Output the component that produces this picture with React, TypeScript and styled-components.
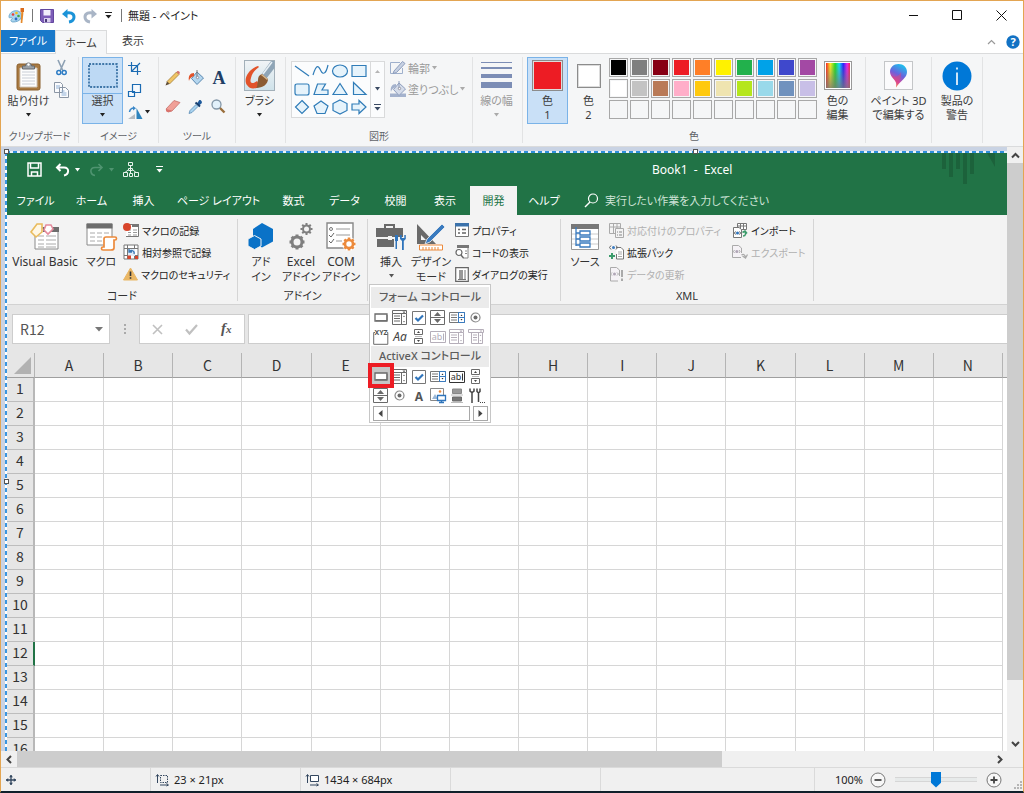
import React from "react";
import styled, { createGlobalStyle } from "styled-components";

const uiFont = `"Noto Sans", "Noto Sans CJK JP", sans-serif`;
const sheetFont = `"Noto Sans CJK JP", sans-serif`;

const GlobalStyle = createGlobalStyle`
  *, *::before, *::after { box-sizing: border-box; }
  html, body { margin: 0; padding: 0; }
  body { font-family: ${uiFont}; font-size: 11px; color: #3c3c3c; font-feature-settings: "palt"; }
  button, input { font: inherit; color: inherit; font-feature-settings: inherit; }
  button { margin: 0; padding: 0; border: 0; background: transparent; }
  svg { display: block; flex: none; overflow: visible; }
`;

/* ---------- window frame ---------- */

const Window = styled.main`
  display: flex;
  flex-direction: column;
  height: 100vh;
  min-height: 400px;
  overflow: hidden;
  background: #fff;
  border: 1px solid #e3a552;
  border-bottom: 2px solid #10202b;
`;

const TitleBar = styled.header`
  display: flex;
  align-items: center;
  height: 29px;
  flex: none;
  padding-left: 7px;
`;

const QuickTools = styled.div`
  display: flex;
  align-items: center;
  gap: 5px;
`;

const Title = styled.h1`
  margin: 0 0 0 4px;
  font-size: 11px;
  line-height: 16px;
  font-weight: 400;
  color: #222;
`;

const Divider = styled.span`
  width: 1px;
  height: 13px;
  background: #777;
  margin: 0 2px;
`;

const ToolButton = styled.button`
  display: flex;
  align-items: center;
  justify-content: center;
`;

const WindowControls = styled.div`
  display: flex;
  margin-left: auto;
`;

const WindowButton = styled.button`
  display: flex;
  align-items: center;
  justify-content: center;
  width: 44px;
  height: 29px;
`;

const PaintTabs = styled.nav`
  display: flex;
  flex: none;
  height: 24px;
  border-bottom: 1px solid #dadbdc;
`;

const PaintTab = styled.button<{ $kind?: "file" | "active" }>`
  width: ${(p) => (p.$kind === "file" ? 54 : 52)}px;
  height: ${(p) => (p.$kind === "active" ? 24 : 22)}px;
  line-height: 22px;
  background: ${(p) => (p.$kind === "file" ? "#1979ca" : p.$kind === "active" ? "#f5f6f7" : "transparent")};
  color: ${(p) => (p.$kind === "file" ? "#fff" : "#3c3c3c")};
  border: solid #dadbdc;
  border-width: ${(p) => (p.$kind === "active" ? "1px 1px 0" : "0")};
`;

const TabsEnd = styled.div`
  display: flex;
  align-items: center;
  gap: 10px;
  margin-left: auto;
  padding-right: 3px;
`;

const PaintRibbon = styled.section`
  display: flex;
  flex: none;
  padding: 3px 0;
  background: #f5f6f7;
  border-bottom: 1px solid #dadbdc;
  overflow: hidden;
`;

const PaintGroup = styled.div<{ $w: number; $pad?: number }>`
  display: flex;
  flex-direction: column;
  flex: none;
  width: ${(p) => p.$w}px;
  border-right: 1px solid #e2e3e4;
  & > div:first-child { padding-left: ${(p) => p.$pad ?? 0}px; }
`;

const GroupBody = styled.div`
  display: flex;
  align-items: flex-start;
  height: 70px;
`;

const GroupLabel = styled.div`
  text-align: center;
  height: 16px;
  font-size: 10px;
  line-height: 18px;
  color: #5f6368;
  white-space: nowrap;
`;

const BigButton = styled.button<{ $w: number; $on?: boolean; $off?: boolean }>`
  display: flex;
  flex-direction: column;
  align-items: center;
  flex: none;
  width: ${(p) => p.$w}px;
  height: 67px;
  line-height: 14px;
  white-space: nowrap;
  color: ${(p) => (p.$off ? "#9a9a9a" : "#3c3c3c")};
  background: ${(p) => (p.$on ? "#c9e0f7" : "transparent")};
  outline: ${(p) => (p.$on ? "1px solid #7ab3e8" : "none")};
  outline-offset: -1px;
`;

const BigIcon = styled.span<{ $split?: boolean }>`
  display: flex;
  align-items: center;
  justify-content: center;
  align-self: stretch;
  height: 37px;
  border-bottom: ${(p) => (p.$split ? "1px solid #7ab3e8" : "0")};
`;

const ArrowLine = styled.span`
  display: flex;
  align-items: center;
  height: 14px;
`;

const IconColumn = styled.div<{ $pad?: number }>`
  display: flex;
  flex-direction: column;
  align-items: ${(p) => (p.$pad ? "flex-start" : "center")};
  padding-left: ${(p) => p.$pad ?? 0}px;
`;

const IconButton = styled.button`
  display: flex;
  align-items: center;
  justify-content: center;
  gap: 2px;
  height: 22px;
`;

const SideIcons = styled(IconColumn)`
  width: 22px;
`;

const ToolGrid = styled.div`
  display: grid;
  grid-template-columns: repeat(3, 23px);
  grid-auto-rows: 28px;
  padding-top: 7px;
`;

const ToolCell = styled.button`
  display: flex;
  align-items: center;
  justify-content: center;
`;

const ShapeBox = styled.div`
  display: flex;
  margin-top: 4px;
  width: 94px;
  height: 57px;
  background: #fbfcfd;
  border: 1px solid #d9dadb;
`;

const ShapeGrid = styled.div`
  display: grid;
  flex: 1;
  grid-template-columns: repeat(4, 19px);
  grid-template-rows: repeat(3, 18px);
`;

const ShapeScroll = styled.div`
  display: grid;
  grid-template-rows: repeat(3, 1fr);
  width: 14px;
  border-left: 1px solid #d9dadb;
`;

const ShapeOptions = styled.div`
  display: flex;
  flex-direction: column;
  padding-left: 5px;
`;

const ShapeOption = styled.button`
  display: flex;
  align-items: center;
  gap: 2px;
  height: 21px;
  color: #9a9a9a;
  white-space: nowrap;
`;

const Swatch = styled.span<{ $c: string; $s: number }>`
  width: ${(p) => p.$s}px;
  height: ${(p) => p.$s}px;
  background: ${(p) => p.$c};
  border: 1px solid #8c8c8c;
  box-shadow: inset 0 0 0 1px #dcdcdc;
`;

const Palette = styled.div`
  display: grid;
  grid-template-columns: repeat(10, 19px);
  grid-auto-rows: 19px;
  gap: 2px;
  padding: 1px 0 0;
  margin-right: 2px;
`;

const PaletteCell = styled.button<{ $c: string }>`
  background: ${(p) => p.$c};
  border: 1px solid #a8a8a8;
  box-shadow: inset 0 0 0 1px #f5f6f7;
`;

/* ---------- paint work area ---------- */

const WorkArea = styled.div`
  display: flex;
  flex: 1;
  min-height: 0;
  background: #c9d3e4;
`;

const Viewport = styled.div`
  position: relative;
  flex: 1;
  min-width: 0;
  overflow: hidden;
  padding: 6px 0 0 6px;
`;

const SelectionTop = styled.i`
  position: absolute;
  left: 5px;
  right: 0;
  top: 4px;
  height: 2px;
  background: repeating-linear-gradient(90deg, #2f8fdc 0 4px, #eaf3fb 4px 7px);
`;

const SelectionLeft = styled.i`
  position: absolute;
  left: 4px;
  top: 5px;
  bottom: 0;
  width: 2px;
  background: repeating-linear-gradient(180deg, #3a96e0 0 4px, #fff 4px 7px);
`;

const Handle = styled.i<{ $x: string; $y: string }>`
  position: absolute;
  left: ${(p) => p.$x};
  top: ${(p) => p.$y};
  width: 5px;
  height: 5px;
  background: #fff;
  border: 1px solid #555;
`;

const VScroll = styled.div`
  display: flex;
  flex-direction: column;
  width: 16px;
  flex: none;
  background: #f0f0f0;
`;

const HScroll = styled.div`
  display: flex;
  flex: none;
  height: 16px;
  padding-right: 16px;
  background: #f0f0f0;
`;

const ScrollArrow = styled.button`
  display: flex;
  align-items: center;
  justify-content: center;
  width: 16px;
  height: 16px;
  flex: none;
`;

const Thumb = styled.div<{ $grow: number }>`
  flex: ${(p) => p.$grow} 1 0;
  background: #cdcdcd;
`;

const Track = styled.div<{ $grow: number }>`
  flex: ${(p) => p.$grow} 1 0;
`;

const StatusBar = styled.footer`
  display: flex;
  align-items: center;
  flex: none;
  height: 24px;
  background: #f0f0f0;
  border-top: 1px solid #dadada;
  color: #222;
`;

const StatusCell = styled.div<{ $w?: number }>`
  display: flex;
  align-items: center;
  gap: 5px;
  height: 23px;
  padding-left: 5px;
  border-right: 1px solid #dadada;
  flex: ${(p) => (p.$w ? "none" : "1")};
  width: ${(p) => (p.$w ? `${p.$w}px` : "auto")};
`;

const ZoomArea = styled.div`
  display: flex;
  align-items: center;
  gap: 7px;
  padding-left: 20px;
`;

const Slider = styled.input`
  appearance: none;
  width: 82px;
  height: 18px;
  margin: 0 2px;
  background: linear-gradient(#d6d6d6 1px, #e7eaea 1px 4px, #d6d6d6 4px) center / 100% 5px no-repeat;
  &::-webkit-slider-thumb {
    appearance: none;
    width: 10px;
    height: 16px;
    background: #0078d7;
    clip-path: polygon(0 0, 100% 0, 100% 70%, 50% 100%, 0 70%);
  }
`;

const Grip = styled.span`
  display: flex;
  align-self: flex-end;
  padding: 0 1px 0 4px;
`;

/* ---------- excel ---------- */

const Excel = styled.div`
  display: flex;
  flex-direction: column;
  background: #e6e6e6;
  color: #333;
`;

const ExcelTitle = styled.div`
  display: flex;
  align-items: center;
  height: 33px;
  padding-left: 20px;
  background: #217346;
  color: #fff;
`;

const ExcelQuick = styled.div`
  display: flex;
  align-items: center;
  gap: 5px;
  width: 625px;
  & > button:nth-child(2) { margin-left: 8px; }
  & > button:nth-child(4) { margin-left: 4px; }
  & > button:nth-child(6) { margin-left: 4px; }
  & > button:nth-child(7) { margin-left: 12px; }
`;

const BookName = styled.h2`
  margin: 0;
  font-size: 12px;
  line-height: 16px;
  font-weight: 400;
  white-space: pre;
`;

const BannerArt = styled.span`
  display: flex;
  align-self: flex-start;
  margin-left: auto;
  padding-right: 8px;
`;

const ExcelTabs = styled.nav`
  display: flex;
  height: 29px;
  background: #217346;
`;

const ExcelTab = styled.button<{ $w: number; $on?: boolean }>`
  width: ${(p) => p.$w}px;
  flex: none;
  height: 29px;
  font-size: 11px;
  line-height: 27px;
  white-space: nowrap;
  color: ${(p) => (p.$on ? "#217346" : "#fff")};
  background: ${(p) => (p.$on ? "#f3f3f3" : "transparent")};
`;

const TellMe = styled.label`
  display: flex;
  align-items: center;
  gap: 6px;
  flex: 1;
  min-width: 0;
  padding-left: 13px;
  input {
    flex: 1;
    min-width: 0;
    height: 20px;
    padding: 0;
    border: 0;
    outline: 0;
    background: transparent;
  }
  input::placeholder { color: #cfe3d7; opacity: 1; }
`;

const ExcelRibbon = styled.section`
  display: flex;
  height: 90px;
  padding-top: 4px;
  background: #f3f3f3;
  border-bottom: 1px solid #d2d2d2;
`;

const ExcelGroup = styled.div<{ $w: number; $pad?: number }>`
  position: relative;
  display: flex;
  flex-direction: column;
  flex: none;
  width: ${(p) => p.$w}px;
  height: 82px;
  border-right: 1px solid #d5d5d5;
  & > div:first-child { padding-left: ${(p) => p.$pad ?? 0}px; }
`;

const ExcelBody = styled.div`
  display: flex;
  align-items: flex-start;
  height: 69px;
  flex: none;
`;

const ExcelLabel = styled.div`
  text-align: center;
  line-height: 16px;
`;

const ExcelBig = styled.button<{ $w: number }>`
  display: flex;
  flex-direction: column;
  align-items: center;
  flex: none;
  width: ${(p) => p.$w}px;
  line-height: 15px;
  white-space: nowrap;
`;

const ExcelBigIcon = styled.span`
  display: flex;
  align-items: center;
  justify-content: center;
  height: 35px;
`;

const Latin = styled.span`
  font-size: 12px;
`;

const SmallColumn = styled.div<{ $w?: number }>`
  display: flex;
  flex-direction: column;
  padding-left: 4px;
  width: ${(p) => (p.$w ? `${p.$w}px` : "auto")};
`;

const SmallButton = styled.button<{ $off?: boolean }>`
  display: flex;
  align-items: center;
  gap: 3px;
  height: 22px;
  font-size: 10px;
  white-space: nowrap;
  color: ${(p) => (p.$off ? "#b0b0b0" : "#222")};
`;

const Gallery = styled.div`
  position: absolute;
  z-index: 2;
  left: 1px;
  top: 65px;
  width: 122px;
  height: 139px;
  padding: 2px 1px;
  background: #fff;
  border: 1px solid #c6c6c6;
`;

const GalleryHead = styled.h3`
  margin: 0;
  height: 21px;
  padding-left: 8px;
  line-height: 20px;
  font-size: 11px;
  font-weight: 500;
  color: #5c5c5c;
  background: #ebebeb;
  white-space: nowrap;
`;

const GalleryGrid = styled.div`
  display: grid;
  grid-template-columns: repeat(6, 19px);
  grid-auto-rows: 19px;
`;

const GalleryCell = styled.button<{ $hot?: boolean }>`
  display: flex;
  align-items: center;
  justify-content: center;
  background: ${(p) => (p.$hot ? "#c5c5c5" : "transparent")};
`;

const RedMark = styled.i`
  position: absolute;
  left: -2px;
  top: 78px;
  width: 26px;
  height: 25px;
  border: 4px solid #ed1c24;
`;

const GalleryScroll = styled.div`
  display: flex;
  height: 15px;
  margin: 1px 1px 0 2px;
`;

const GalleryArrow = styled.button`
  display: flex;
  align-items: center;
  justify-content: center;
  width: 15px;
  border: 1px solid #a8a8a8;
`;

const GalleryThumb = styled.span`
  flex: 1;
  margin-right: 3px;
  border: 1px solid #a8a8a8;
  border-left: 0;
`;

const FormulaBar = styled.div`
  display: flex;
  align-items: center;
  height: 48px;
  padding: 0 0 0 5px;
`;

const NameBox = styled.div`
  display: flex;
  align-items: center;
  width: 98px;
  height: 30px;
  padding: 0 6px 0 7px;
  background: #fff;
  border: 1px solid #cdcdcd;
  input {
    flex: 1;
    min-width: 0;
    padding: 0;
    border: 0;
    outline: 0;
    font-family: ${sheetFont};
    font-size: 14px;
    line-height: 20px;
    color: #555;
  }
`;

const Dots = styled.span`
  width: 29px;
  display: flex;
  justify-content: center;
`;

const FormulaButtons = styled.div`
  display: grid;
  grid-template-columns: repeat(3, 1fr);
  width: 106px;
  height: 30px;
  background: #fff;
  border: 1px solid #cdcdcd;
`;

const FormulaButton = styled.button`
  display: flex;
  align-items: center;
  justify-content: center;
`;

const FormulaInput = styled.input`
  flex: 1;
  min-width: 0;
  height: 30px;
  margin-left: 3px;
  background: #fff;
  border: 1px solid #cdcdcd;
  border-right: 0;
  outline: 0;
`;

const SheetWrap = styled.div`
  padding-right: 4px;
  background: linear-gradient(#e6e6e6 24px, #9f9f9f 24px 25px, #fff 25px);
`;

const Sheet = styled.table`
  width: 100%;
  table-layout: fixed;
  border-collapse: separate;
  border-spacing: 0;
  font-family: ${sheetFont};
  font-size: 14px;
  line-height: 20px;
  th { padding: 0; font-weight: 400; color: #333; background: #e6e6e6; }
  td { padding: 0; height: 24px; border: solid #d6d6d6; border-width: 0 1px 1px 0; }
`;

const ColHead = styled.th`
  height: 25px;
  border-bottom: 1px solid #9f9f9f;
  border-right: 1px solid #b4b4b4;
`;

const Corner = styled.th`
  width: 28px;
  height: 25px;
  border-bottom: 1px solid #9f9f9f;
  border-right: 1px solid #b4b4b4;
  svg { margin-left: 7px; }
`;

const RowHead = styled.th<{ $on?: boolean }>`
  line-height: 18px;
  border-right: ${(p) => (p.$on ? "2px solid #217346" : "2px solid #b8b8b8")};
  border-bottom: 1px solid #bdbdbd;
`;

const RowNumber = styled.span`
  display: block;
  height: 21px;
`;

/* ---------- icons ---------- */

type IcoProps = { w: number; h: number; vb?: string; children: React.ReactNode };
const Ico = ({ w, h, vb, children }: IcoProps) => (
  <svg width={w} height={h} viewBox={vb ?? `0 0 ${w} ${h}`} fill="none" aria-hidden="true">
    {children}
  </svg>
);

const Down = ({ c = "#222" }: { c?: string }) => (
  <Ico w={5} h={4}><path d="M0 0h5L2.500 3.500z" fill={c} /></Ico>
);

const PaletteIcon = () => (
  <Ico w={17} h={16}>
    <path d="M1 8C2 4 6 2 10 3c3 1 4 4 3 7-1 3-5 4-8 4-2 0-3-2-1-3 1-1-1-2-2-1-1 0-1-1-1-2z" fill="#a9d5ee" stroke="#5d9cc4" strokeWidth=".8" />
    <circle cx="5" cy="6.500" r="1.300" fill="#e8413a" /><circle cx="8.500" cy="5" r="1.300" fill="#f3c11b" />
    <circle cx="10.500" cy="8" r="1.300" fill="#3fa548" /><circle cx="8" cy="11" r="1.400" fill="#2e6bc8" />
    <path d="M13.500 1l1.800 0 0 5-1 9-1.600 0z" fill="#e58a2c" /><path d="M12.500 0h3.500v4h-3.500z" fill="#d96b1d" />
  </Ico>
);
const SaveIcon = () => (
  <Ico w={14} h={14}>
    <path d="M.500.500h13v13H2.500l-2-2z" fill="#7d5db8" stroke="#63479e" />
    <path d="M3.500 1h7v5.500h-7z" fill="#f2eefb" /><path d="M4 9h6.500v4.500H4z" fill="#d9cfee" /><path d="M5 10h2v3H5z" fill="#4b3a78" />
  </Ico>
);
const UndoIcon = () => (
  <Ico w={18} h={14} vb="-3 0 18 14"><path d="M3 4.500c5-2 9 0 9 3.500 0 3-2 4.500-5 5" stroke="#1b93d8" strokeWidth="3" /><path d="M0 5l5.500-5v9.500z" fill="#1b93d8" /></Ico>
);
const RedoIcon = () => (
  <Ico w={15} h={14} vb="-1 0 15 14"><path d="M11 4.500c-5-2-9 0-9 3.500 0 3 2 4.500 5 5" stroke="#a9b5c6" strokeWidth="3" /><path d="M14 5L8.500 0v9.500z" fill="#a9b5c6" /></Ico>
);
const MoreIcon = ({ c = "#222" }: { c?: string }) => (
  <Ico w={7} h={7}><path d="M0 .500h7" stroke={c} /><path d="M.500 3h6l-3 3.500z" fill={c} /></Ico>
);
const ClipboardIcon = () => (
  <Ico w={26} h={30}>
    <rect x="1" y="3" width="23" height="26" rx="2" fill="#a97a41" stroke="#8a5f2d" />
    <path d="M4 7h17v19H4z" fill="#fdfdfd" stroke="#d0c6ba" />
    <path d="M6 11h13M6 14h13M6 17h13M6 20h13M6 23h13" stroke="#c9ced6" />
    <path d="M6.500 8V5h3c0-4 6-4 6 0h3v3z" fill="#9aa0a6" stroke="#666b70" /><circle cx="12.500" cy="3.500" r="1.200" fill="#fff" />
  </Ico>
);
const CutIcon = () => (
  <Ico w={11} h={16}>
    <path d="M2 0l5 11M9 0L4 11" stroke="#8da0b3" strokeWidth="1.600" />
    <circle cx="2.800" cy="12.500" r="2" stroke="#2c7cc4" strokeWidth="1.500" /><circle cx="8.200" cy="12.500" r="2" stroke="#2c7cc4" strokeWidth="1.500" />
  </Ico>
);
const CopyIcon = () => (
  <Ico w={15} h={16}>
    <path d="M.500.500h6l2 2v8h-8zM5.500 5.500h6l3 3v7h-9z" fill="#fbfcfe" stroke="#8b96a5" />
    <path d="M2 4h4M2 6h3M7.500 9h3M7.500 11h5M7.500 13h5" stroke="#8fb0d6" />
  </Ico>
);
const SelectIcon = () => (
  <Ico w={30} h={25}><rect x="1" y="1" width="28" height="23" stroke="#15568f" strokeWidth="1.400" strokeDasharray="2 1.300" fill="#bdd9f4" /></Ico>
);
const CropIcon = () => (
  <Ico w={13} h={13}><path d="M3.500 0v9.500H13M0 3.500h9.500V13M3.500 9.500L12 1" stroke="#1b6bb3" strokeWidth="1.200" /></Ico>
);
const ResizeIcon = () => (
  <Ico w={13} h={13}><path d="M4.500.500h8v8h-8zM.500 7.500h6v5h-6z" stroke="#1b6bb3" fill="#f5f9fd" strokeWidth="1.200" /></Ico>
);
const RotateIcon = () => (
  <Ico w={15} h={13}>
    <path d="M7 13H0l7-5z" fill="#b6bcc2" /><path d="M8.500 13V2l6 11z" fill="#2e83bd" />
    <path d="M1.500 6C2 3 4 2 6 2" stroke="#3987c8" strokeWidth="1.500" /><path d="M5 0l3 2.200L5 4.500z" fill="#3987c8" />
  </Ico>
);
const PencilIcon = () => (
  <Ico w={16} h={16}>
    <path d="M2 11.500L11.500 2l2.500 2.500L4.500 14z" fill="#efc465" stroke="#9b7430" strokeWidth=".7" /><path d="M11.500 2l1-1c1-.6 3 1.200 2.200 2.200L14 4.500z" fill="#d4706b" />
    <path d="M2 11.500l2.500 2.500-4 1.500z" fill="#5c4a33" />
  </Ico>
);
const BucketIcon = ({ off }: { off?: boolean }) => (
  <Ico w={16} h={16}>
    {off && <path d="M0 12.500h16V16H0z" fill="#a4b2cd" />}
    <path d="M9 2l6.500 6L9 14.500 3.500 8.500z" fill={off ? "#d5dcea" : "#b4d6ef"} stroke={off ? "#8d9dbd" : "#5a88b0"} />
    <path d="M9 0v8" stroke={off ? "#8d9dbd" : "#777"} /><circle cx="9.500" cy="7.500" r="1.200" fill="#fff" stroke="#667" strokeWidth=".6" />
    <path d="M6 3C2 3 0 6 1 11c.5-2 1.500-4 5-5z" fill={off ? "#a4b2cd" : "#e1532b"} />
  </Ico>
);
const LetterIcon = () => (
  <Ico w={14} h={16}>
    <text x="7" y="14" textAnchor="middle" fontFamily="Liberation Serif, serif" fontWeight="700" fontSize="18" fill="#1f3f66">A</text>
  </Ico>
);
const EraserIcon = () => (
  <Ico w={16} h={14}>
    <path d="M1 10L9 1.500l6 2-8 8.500-4 1z" fill="#f0a098" stroke="#c06660" strokeWidth=".7" /><path d="M1 10l5 1.200L7 12l-4 1.300-2-1z" fill="#d9736d" />
  </Ico>
);
const DropperIcon = () => (
  <Ico w={15} h={15}>
    <path d="M9 4.500l2-3c1-1.500 4 1 2.500 3L10.500 7z" fill="#1e5a9c" /><path d="M7.500 3.500l4.500 4" stroke="#173e6d" strokeWidth="2" />
    <path d="M8 5.500l2 2-6 6-3 1 1-3z" fill="#a8d3f0" stroke="#5b8bb4" strokeWidth=".8" />
  </Ico>
);
const LensIcon = () => (
  <Ico w={15} h={15}>
    <path d="M8.500 8.500l5 5" stroke="#9a6f3c" strokeWidth="2.400" /><circle cx="5.500" cy="5.500" r="4.500" fill="#e2f1fb" stroke="#8397a8" strokeWidth="1.300" />
  </Ico>
);
const BrushIcon = () => (
  <Ico w={31} h={31}>
    <defs><linearGradient id="brushBg" x1="0" y1="0" x2="0" y2="1"><stop stopColor="#f1f4f6" /><stop offset="1" stopColor="#cfe2ea" /></linearGradient></defs>
    <rect x=".5" y=".5" width="30" height="30" fill="url(#brushBg)" stroke="#a3b0b9" />
    <path d="M14 6C4 9-1 20 3 25c3 5 9 4 13 1l-3-5c-4 3-8 3-6-3 1-5 4-8 8-11z" fill="#e2532a" />
    <path d="M30.500 1v7L22 19l-5-4L27 1z" fill="#8fa5b7" /><path d="M28 2L19 14" stroke="#e8f0f5" strokeWidth="1.500" />
    <path d="M18 14l6 5c0 5-5 9-12 9 2-2 1-4 2-8 0-3 1-5 4-6z" fill="#8b5b32" /><path d="M17.500 14.500l6 5" stroke="#d8b98f" strokeWidth="1.500" />
  </Ico>
);
const shapePaths = [
  "M2 4l14 10", "M1 13C5 0 7 5 9 9s5 3 7-6", "M1.500 9a7.500 6 0 1 0 15 0a7.500 6 0 1 0-15 0", "M2 3.500h14v11H2z",
  "M4 4h10q2 0 2 2v7q0 2-2 2H4q-2 0-2-2V6q0-2 2-2z", "M2 14.500L5.500 4h8L10 10h6v4.500z", "M9 3.500l7 11H2z", "M3.500 2.500v12h12.500z",
  "M9 2.500l6.500 6.500L9 15.500 2.500 9z", "M9 3l7 5-3 7.500H5L2 8z", "M9 2l7 3.500v7L9 16l-7-3.500v-7z", "M2 6h7V2.500L16 9l-7 6.500V12H2z",
];
const ShapeIcon = ({ d, open }: { d: string; open?: boolean }) => (
  <Ico w={18} h={18}><path d={d} stroke="#2f7cb8" strokeWidth="1.200" fill={open ? "none" : "#e6f3fb"} /></Ico>
);
const OutlineIcon = () => (
  <Ico w={16} h={15}><path d="M10 2.500H.500v11h12V8" stroke="#9fb0cc" /><path d="M4 11L12.500 1.500l2.500 2L6.500 12.500 3 13.500z" fill="#c7d1e2" stroke="#8d9dbd" /></Ico>
);
const LinesIcon = () => (
  <Ico w={31} h={27}><path d="M0 0h31v1H0zM0 5h31v2H0zM0 12h31v4H0zM0 20h31v6H0z" fill="#7c8db5" /></Ico>
);
const RainbowIcon = () => (
  <Ico w={28} h={29}>
    <defs>
      <linearGradient id="hue"><stop stopColor="#f22" /><stop offset=".18" stopColor="#fe2" /><stop offset=".38" stopColor="#2d2" /><stop offset=".55" stopColor="#1df" /><stop offset=".72" stopColor="#22f" /><stop offset=".88" stopColor="#e2e" /><stop offset="1" stopColor="#f24" /></linearGradient>
      <linearGradient id="shade" x1="0" y1="0" x2="0" y2="1"><stop stopColor="#777" stopOpacity="0" /><stop offset="1" stopColor="#777" stopOpacity=".8" /></linearGradient>
    </defs>
    <rect x=".5" y=".5" width="27" height="28" fill="#fff" stroke="#999" />
    <rect x="2" y="2" width="24" height="25" fill="url(#hue)" /><rect x="2" y="2" width="24" height="25" fill="url(#shade)" />
  </Ico>
);
const Paint3DIcon = () => (
  <Ico w={29} h={29}>
    <defs>
      <linearGradient id="drop" x1=".7" y1="0" x2=".3" y2="1"><stop stopColor="#19c5ee" /><stop offset=".45" stopColor="#6a63dd" /><stop offset=".75" stopColor="#d8479b" /><stop offset="1" stopColor="#fbb534" /></linearGradient>
    </defs>
    <rect x=".5" y=".5" width="28" height="28" fill="#fbfbfc" stroke="#c4c6c8" />
    <path d="M14.500 3c5 0 8.500 3.500 8.500 8 0 6-6 8-11 15.500 1-4 0-6-2-8C8 16 6 14 6 11c0-4.500 3.500-8 8.500-8z" fill="url(#drop)" />
    <path d="M7 14c3 3 8 2 10-3 1 5-2 9-5 15.500 1-5-1-7-5-12.500z" fill="#e0457c" fillOpacity=".5" />
  </Ico>
);
const InfoIcon = () => (
  <Ico w={30} h={30}><circle cx="15" cy="15" r="14.500" fill="#0078d7" /><path d="M14.200 11.500h1.600V24h-1.600zM14.200 6.500h1.600v2h-1.600z" fill="#fff" /></Ico>
);
const HelpIcon = () => (
  <Ico w={14} h={14}><circle cx="7" cy="7" r="6.700" fill="#1272c4" /><text x="7" y="11" textAnchor="middle" fontSize="11" fontWeight="700" fontFamily="Noto Sans, sans-serif" fill="#fff">?</text></Ico>
);
const Chevron = ({ d }: { d: "up" | "down" | "left" | "right" }) => (
  <Ico w={9} h={9}>
    <path d={{ up: "M1 6.500L4.500 3 8 6.500", down: "M1 3l3.500 3.500L8 3", left: "M6 1L2.500 4.500 6 8", right: "M3 1l3.500 3.500L3 8" }[d]} stroke="#444" strokeWidth="2" />
  </Ico>
);

/* excel quick access */
const XSave = () => <Ico w={15} h={15}><path d="M1 1h13v13H1zM3.500 1v5h8V1M4.500 14v-4h6v4" stroke="#fff" strokeWidth="1.500" /></Ico>;
const XUndo = () => <Ico w={15} h={14}><path d="M2 4.500h7c6 0 5 7 0 8M5.500 1L2 4.500 5.500 8" stroke="#fff" strokeWidth="2" /></Ico>;
const XRedo = () => <Ico w={15} h={14}><path d="M13 4.500H6c-6 0-5 7 0 8M9.500 1L13 4.500 9.500 8" stroke="#4f9470" strokeWidth="1.600" /></Ico>;
const XTree = () => (
  <Ico w={16} h={15}>
    <path d="M5.500.500h4v3h-4zM5.500 6.500h4v2h-4zM.500 10.500h4v4h-4zM6.500 11.500h3v3h-3zM11.500 10.500h4v4h-4zM7.500 4v7M5 8l-3 2.500M10 8l3 2.500" stroke="#e8f3ec" />
  </Ico>
);

/* excel ribbon */
const VBIcon = () => (
  <Ico w={30} h={28}>
    <path d="M5 5h23v21H5z" fill="#fff" stroke="#8a8a8a" /><path d="M13 4h16v5H13z" fill="#6d6d6d" />
    <path d="M8 13h6M16 13h10M8 17h6M16 17h10M8 21h6M16 21h10M8 24h6M16 24h10" stroke="#aaa" />
    <path d="M7 1h5v8L6 14 1 9z" fill="#fff7e4" stroke="#e9bb5c" strokeWidth="1.600" /><path d="M16 2h5l2 4-5 5-4-4z" fill="#fff" stroke="#e58a9c" strokeWidth="1.600" />
  </Ico>
);
const MacroIcon = () => (
  <Ico w={31} h={28}>
    <path d="M1 1h25v21H1z" fill="#fff" stroke="#8a8a8a" /><path d="M.5.5h26v5H.5z" fill="#6d6d6d" />
    <path d="M4 10h5M11 10h5M18 10h5M4 14h5M11 14h5M4 18h5M11 18h5" stroke="#aaa" />
    <path d="M20 14h9c2 0 2 3 0 3h-1v8c0 2-2 2-3 2h-8c-2 0-2-3 0-3h1v-8c0-1 1-2 2-2z" fill="#fff" stroke="#ec8a3c" strokeWidth="1.700" />
  </Ico>
);
const RecordIcon = () => (
  <Ico w={16} h={15}>
    <path d="M4 1.500h11.500v12H3" fill="#fff" stroke="#777" /><path d="M9 1h7v3H9z" fill="#777" /><path d="M5 7h3M10 7h4M5 9.500h3M10 9.500h4M5 12h3M10 12h4" stroke="#999" />
    <circle cx="4" cy="4" r="4" fill="#d8452b" />
  </Ico>
);
const RelativeIcon = () => (
  <Ico w={16} h={16}>
    <path d="M1 1h14v14H1zM1 4.500h14M1 11.500h14M4.500 1v14M11.500 1v14" fill="#fff" stroke="#777" />
    <path d="M5 5h7v7H5z" fill="#dfeaf6" /><path d="M6 8c2-3 6-1 5 2M6 5v3h3" stroke="#3b78b5" strokeWidth="1.300" /><path d="M4.500 11.500H8V15H4.500zM12 12h3v3h-3z" fill="#d8452b" />
  </Ico>
);
const WarnIcon = () => <Ico w={15} h={14}><path d="M7.500 1L14.500 13H.5z" fill="#eab765" stroke="#eab765" /><path d="M6.700 4.500h1.600V9H6.700zM6.700 10.200h1.600v1.500H6.700z" fill="#333" /></Ico>;
const HexIcon = () => (
  <Ico w={26} h={27}><path d="M14 0l11 6v12.500l-11 6-9-5V6z" fill="#0a72c7" /><path d="M6.500 12.500l6.500 3.500v7l-6.500 3.500L0 23v-7z" fill="#0a72c7" stroke="#f3f3f3" strokeWidth="1" /></Ico>
);
const Gear = ({ x, y, r, c, w }: { x: number; y: number; r: number; c: string; w: number }) => (
  <g stroke={c}>
    <circle cx={x} cy={y} r={r} strokeWidth={w} />
    {[0, 45, 90, 135, 180, 225, 270, 315].map((a) => (
      <path key={a} d={`M${x} ${y - r - 0.5}v-2`} strokeWidth={w} transform={`rotate(${a} ${x} ${y})`} />
    ))}
  </g>
);
const GearsIcon = () => <Ico w={26} h={29}><Gear x={9} y={20} r={5} c="#7f7f7f" w={3} /><Gear x={18.500} y={7} r={3.500} c="#7f7f7f" w={2} /></Ico>;
const ComIcon = () => (
  <Ico w={31} h={30}>
    <path d="M1 1h26v25H1z" fill="#fff" stroke="#888" strokeWidth="1.400" /><path d="M10 7h14M10 13h14M10 19h6" stroke="#999" /><circle cx="5" cy="7" r="1.500" stroke="#777" />
    <path d="M3 13l2 2 3-4M3 19l2 2 3-4" stroke="#666" /><circle cx="23" cy="22" r="7" fill="#fff" /><Gear x={23} y={22} r={4} c="#ec8a3c" w={2.600} />
  </Ico>
);
const ToolboxIcon = () => (
  <Ico w={30} h={28}>
    <path d="M9 5V2h9v3" stroke="#6a6a6a" strokeWidth="2" /><path d="M0 5h27v9H0zM1 16h17v8H1z" fill="#6a6a6a" /><path d="M12 13h4v4h-4z" fill="#f3f3f3" />
    <path d="M19 12h3v6h-1v8h-1.500v-8H19zM24 12v4l2 2v9h1.800v-9l2-2v-4h-1.500v3h-2.500v-3z" fill="#2f74bb" />
  </Ico>
);
const DesignIcon = () => (
  <Ico w={30} h={28}>
    <path d="M1 1l19 20H1z" fill="#6a6a6a" /><path d="M5 12l5 5H5z" fill="#f3f3f3" />
    <path d="M11 16L26 1l3 3-15 15-5 2z" fill="#3a7bbf" stroke="#f3f3f3" strokeWidth=".8" /><path d="M3.500 22h23v5h-23zM7 24v3M10 24v3M13 24v3M16 24v3M19 24v3M22 24v3" stroke="#ec8a3c" fill="#fff" />
  </Ico>
);
const PropIcon = () => <Ico w={14} h={14}><path d="M.5.5h13v13H.5z" fill="#fff" stroke="#777" /><path d="M0 0h14v3.500H0z" fill="#3b72ab" /><path d="M3 6.500h2M3 10h2M7 6.500h4M7 10h4" stroke="#666" strokeWidth="1.400" /></Ico>;
const CodeIcon = () => <Ico w={14} h={14}><path d="M2 1h11v12H8" fill="#fff" stroke="#888" /><path d="M2 0h12v3H2z" fill="#777" /><path d="M10 6h2M10 8.500h2" stroke="#888" /><circle cx="4" cy="7.500" r="3" fill="#fff" stroke="#666" strokeWidth="1.200" /><path d="M6 10l2.500 3" stroke="#666" strokeWidth="1.400" /></Ico>;
const DialogIcon = () => <Ico w={14} h={15}><path d="M.7.7h12.600v13.600H.7z" fill="#fff" stroke="#666" strokeWidth="1.200" /><path d="M4 3h4v9H4z" fill="#999" /><path d="M10 3v9M3 12.500h8" stroke="#777" /></Ico>;
const SourceIcon = () => (
  <Ico w={28} h={26}>
    <path d="M.5.5h27v25H.5z" fill="#fff" stroke="#999" /><path d="M0 0h28v5H0z" fill="#777" /><path d="M1 10h26M1 15h26M1 20h26" stroke="#ccc" />
    <path d="M5 3v19M5 9h4M5 15h4M5 21h4" stroke="#3a7bbf" strokeWidth="1.300" /><path d="M9 7h10v4H9zM9 13h10v4H9zM9 19h10v4H9z" fill="#fff" stroke="#3a7bbf" strokeWidth="1.300" />
  </Ico>
);
const MapPropIcon = () => <Ico w={15} h={15}><path d="M.5.5h11v10H.500zM.5 4h11M4.500 1v9M8 1v9" stroke="#aaa" fill="#f3f3f3" /><path d="M6.500 5.500h8v9h-8z" fill="#f3f3f3" stroke="#aaa" /><path d="M8 9h1M8 12h1M10 9h3M10 12h3" stroke="#aaa" strokeWidth="1.500" /></Ico>;
const ExpandIcon = () => <Ico w={15} h={15}><path d="M7 2.500h5l2.500 2.500v9h-7V9" fill="#fff" stroke="#777" /><path d="M9 7h4M9 9h4M9 11.500h4" stroke="#aaa" /><path d="M2 .5L.5 2.500 2 4.500M7 .5l1.500 2L7 4.500" stroke="#666" /><circle cx="4.500" cy="2.500" r="1.500" fill="#3a7bbf" /><path d="M3 8v6M0 11h6" stroke="#3c9c6c" strokeWidth="2" /></Ico>;
const RefreshIcon = () => <Ico w={15} h={15}><path d="M9 14H1.500V.5h6L10.500 3v6" fill="#f5f2f6" stroke="#aaa" /><path d="M3 5.500L1.500 7 3 8.500M8 5.500L9.500 7 8 8.500" stroke="#aaa" /><circle cx="5.500" cy="7" r="1.500" fill="#b0a6b6" /><path d="M13 3v7M13 11.500v2.500" stroke="#aaa" strokeWidth="2" /></Ico>;
const ImportIcon = () => <Ico w={16} h={15}><path d="M5.500.5h9v6h-9zM5.500 3h9M8.500 1v5M11.500 1v5" stroke="#777" fill="#fff" /><path d="M1.500 4.500H7l2.500 2v8h-8z" fill="#fff" stroke="#777" /><circle cx="5.500" cy="10" r="1.500" fill="#2f74bb" /><path d="M3.500 8.500L2.500 10l1 1.500M7.500 8.500l1 1.500-1 1.500" stroke="#555" /><path d="M11 13c3 0 3-3 2-4M10.500 9.500L13 8l2 2.500" stroke="#3c9c6c" strokeWidth="1.600" /></Ico>;
const ExportIcon = () => <Ico w={16} h={15}><path d="M9 12.500H.5V.5h6L9.500 3v5" fill="#f5f2f6" stroke="#aaa" /><path d="M2.500 5L1.500 6.500l1 1.500M7 5l1 1.500L7 8" stroke="#aaa" /><circle cx="4.800" cy="6.500" r="1.500" fill="#b0a6b6" /><path d="M9.500 10c1.500-1 3-1 4 2M15.500 9.500L13.500 13l-3-2" stroke="#aaa" strokeWidth="1.300" /></Ico>;

/* form control gallery */
const g = "#6a6a6a";
const GButton = () => <Ico w={14} h={9}><path d="M1 1h12v7H1z" fill="#fff" stroke={g} strokeWidth="1.300" /><path d="M2 7.700h11V2" stroke={g} /></Ico>;
const GCombo = ({ c = g }: { c?: string }) => <Ico w={15} h={15}><path d="M.5.5h14v3H.5zM.5 3.500v11h9v-11M9.500 3.500v11h5v-11" fill="#fff" stroke={c} /><path d="M10.500 1.500h3l-1.500 2zM11 7h2l-1-1.500zM11 11h2l-1 1.500z" fill={c} /><path d="M2 6h6M2 8.500h6M2 11h6" stroke={c} /></Ico>;
const GCheck = () => <Ico w={14} h={14}><path d="M.5.5h13v13H.5z" fill="#fff" stroke="#777" /><path d="M3.500 7l2.500 2.500L11 4.500" stroke="#2f74bb" strokeWidth="2.200" /></Ico>;
const GSpin = () => <Ico w={15} h={15}><path d="M.5.5h14v14H.5z" fill="#fff" stroke={g} /><path d="M0 7.500h15" stroke={g} /><path d="M7.500 2l3.500 4H4zM7.500 13L11 9H4z" fill={g} /></Ico>;
const GList = () => <Ico w={16} h={11}><path d="M.5.5h15v10H.5z" fill="#fff" stroke="#777" /><path d="M9.500.5h6v10h-6zM9.500 5.500h6" stroke="#3a7bbf" /><path d="M11.500 4h2l-1-1.500zM11.500 7h2l-1 1.500z" fill="#333" /><path d="M2 3h6M2 5.500h6M2 8h6" stroke="#777" /></Ico>;
const GRadio = () => <Ico w={11} h={11}><circle cx="5.500" cy="5.500" r="4.500" fill="#fff" stroke="#888" strokeWidth="1.200" /><circle cx="5.500" cy="5.500" r="2" fill={g} /></Ico>;
const GFrame = () => <Ico w={16} h={16}><path d="M2 3.500H.7v11.800h14.100V3.500H14" stroke={g} /><text x="8" y="6" textAnchor="middle" fontSize="7" fontFamily="Noto Sans, sans-serif" fontWeight="700" fill="#555">XYZ</text></Ico>;
const GLabel = () => <Ico w={16} h={14}><text x="8" y="11" textAnchor="middle" fontSize="12" fontStyle="italic" fontFamily="Noto Sans, sans-serif" fill="#444">Aa</text></Ico>;
const GBar = () => <Ico w={9} h={15}><path d="M.5.500h8v5h-8zM.500 9.500h8v5h-8z" fill="#fff" stroke={g} /><path d="M3 4h3L4.500 2zM3 11h3l-1.500 2z" fill="#444" /><path d="M1 7.500h7" stroke="#bbb" /></Ico>;
const GText = ({ c = "#333" }: { c?: string }) => <Ico w={16} h={12}><path d="M.5.5h15v11H.5z" fill="#fff" stroke={c} /><text x="7" y="9" textAnchor="middle" fontSize="9" fontFamily="Noto Sans, sans-serif" fill={c}>ab</text><path d="M13.500 2.500v7" stroke={c} /></Ico>;
const GDrop = ({ c }: { c: string }) => <Ico w={16} h={15}><path d="M.5.5h15v3H.5zM3.500 3.500v11h7v-11M10.500 3.500v11h4v-11" fill="#fff" stroke={c} /><path d="M11.500 1.500h3L13 3zM11.500 7h2l-1-1.500zM11.500 11h2l-1 1.500z" fill={c} /><path d="M5 6h4M5 8.500h4M5 11h4" stroke={c} /></Ico>;
const GA = () => <Ico w={12} h={12}><text x="6" y="10.500" textAnchor="middle" fontSize="12" fontWeight="700" fontFamily="Noto Sans, sans-serif" fill="#555">A</text></Ico>;
const GImage = () => <Ico w={16} h={15}><path d="M.5.5h13v12H.5z" fill="#fff" stroke="#888" /><path d="M2 11l3-5 3 5z" fill="#9db8d6" /><circle cx="10" cy="3.500" r="1.300" fill="#ec8a3c" /><path d="M7.500 7.500h8v5h-8zM11.500 12.500v2M9 14.500h5" fill="#fff" stroke="#2f74bb" strokeWidth="1.300" /></Ico>;
const GToggle = () => <Ico w={12} h={15}><path d="M1.500 1h9v4.500h-9z" fill="#999" stroke="#888" /><path d="M1.500 9h9v4h-9z" fill="#777" stroke={g} /><path d="M0 7h12M0 14.500h12" stroke="#bbb" /></Ico>;
const GMore = () => <Ico w={16} h={15}><path d="M2 .5v2.500l2 1.500 2-1.500V.5M4 4v11" stroke="#444" strokeWidth="1.500" /><path d="M9 .5v3l1.500 1.500L12 3.500v-3M10.500 5v9" stroke="#444" strokeWidth="1.500" /><path d="M12 14.500h1M14 14.500h1M16 14.500h1" stroke="#444" /></Ico>;

const gray = "#b5aeb9";
const formControls: [string, React.ReactNode][] = [
  ["ボタン", <GButton />], ["コンボ ボックス", <GCombo />], ["チェック ボックス", <GCheck />], ["スピン ボタン", <GSpin />], ["リスト ボックス", <GList />], ["オプション ボタン", <GRadio />],
  ["グループ ボックス", <GFrame />], ["ラベル", <GLabel />], ["スクロール バー", <GBar />], ["テキスト フィールド", <GText c={gray} />], ["コンボ リスト", <GCombo c={gray} />], ["コンボ ドロップダウン", <GDrop c={gray} />],
];
const activeX: [string, React.ReactNode][] = [
  ["コマンド ボタン", <GButton />], ["コンボ ボックス", <GCombo />], ["チェック ボックス", <GCheck />], ["リスト ボックス", <GList />], ["テキスト ボックス", <GText />], ["スクロール バー", <GBar />],
  ["スピン ボタン", <GSpin />], ["オプション ボタン", <GRadio />], ["ラベル", <GA />], ["イメージ", <GImage />], ["トグル ボタン", <GToggle />], ["コントロールの選択", <GMore />],
];

const colors = [
  "#000000", "#7f7f7f", "#880015", "#ed1c24", "#ff7f27", "#fff200", "#22b14c", "#00a2e8", "#3f48cc", "#a349a4",
  "#ffffff", "#c3c3c3", "#b97a57", "#ffaec9", "#ffc90e", "#efe4b0", "#b5e61d", "#99d9ea", "#7092be", "#c8bfe7",
  ...Array(10).fill("#f5f6f7"),
];

const excelTabs: [string, number][] = [
  ["ファイル", 57], ["ホーム", 55], ["挿入", 49], ["ページ レイアウト", 101], ["数式", 49],
  ["データ", 53], ["校閲", 49], ["表示", 50], ["開発", 47], ["ヘルプ", 54],
];

const columns = "ABCDEFGHIJKLMN".split("");
const rows = Array.from({ length: 16 }, (_, i) => i + 1);

/* ---------- sections ---------- */

const PaintHeader = () => (
  <>
    <TitleBar>
      <QuickTools>
        <PaletteIcon />
        <Divider />
        <ToolButton aria-label="上書き保存"><SaveIcon /></ToolButton>
        <ToolButton aria-label="元に戻す"><UndoIcon /></ToolButton>
        <ToolButton aria-label="やり直し"><RedoIcon /></ToolButton>
        <ToolButton aria-label="クイック アクセス ツール バーのカスタマイズ"><Ico w={12} h={7} vb="-3 0 12 7"><path d="M0 .500h7" stroke="#222" /><path d="M.500 3h6l-3 3.500z" fill="#222" /></Ico></ToolButton>
        <Divider />
      </QuickTools>
      <Title>無題 - ペイント</Title>
      <WindowControls>
        <WindowButton aria-label="最小化"><Ico w={11} h={11}><path d="M1 5.500h9" stroke="#111" /></Ico></WindowButton>
        <WindowButton aria-label="最大化"><Ico w={11} h={11}><path d="M.5.5h9v9h-9z" stroke="#111" /></Ico></WindowButton>
        <WindowButton aria-label="閉じる"><Ico w={11} h={11}><path d="M.5.5l10 10M10.500.5l-10 10" stroke="#111" /></Ico></WindowButton>
      </WindowControls>
    </TitleBar>
    <PaintTabs>
      <PaintTab $kind="file">ファイル</PaintTab>
      <PaintTab $kind="active">ホーム</PaintTab>
      <PaintTab>表示</PaintTab>
      <TabsEnd>
        <ToolButton aria-label="リボンの最小化"><Ico w={9} h={6}><path d="M1 5l3.500-3.500L8 5" stroke="#999" strokeWidth="1.200" /></Ico></ToolButton>
        <ToolButton aria-label="ヘルプ"><HelpIcon /></ToolButton>
      </TabsEnd>
    </PaintTabs>
  </>
);

const PaintTools = () => (
  <PaintRibbon>
    <PaintGroup $w={78} $pad={6}>
      <GroupBody>
        <BigButton $w={43}>
          <BigIcon><ClipboardIcon /></BigIcon>貼り付け<ArrowLine><Down /></ArrowLine>
        </BigButton>
        <SideIcons>
          <IconButton aria-label="切り取り"><CutIcon /></IconButton>
          <IconButton aria-label="コピー"><CopyIcon /></IconButton>
        </SideIcons>
      </GroupBody>
      <GroupLabel>クリップボード</GroupLabel>
    </PaintGroup>
    <PaintGroup $w={80} $pad={3}>
      <GroupBody>
        <BigButton $w={41} $on>
          <BigIcon $split><SelectIcon /></BigIcon>選択<ArrowLine><Down /></ArrowLine>
        </BigButton>
        <IconColumn $pad={5}>
          <IconButton aria-label="トリミング"><CropIcon /></IconButton>
          <IconButton aria-label="サイズ変更"><ResizeIcon /></IconButton>
          <IconButton aria-label="回転"><RotateIcon /><Down /></IconButton>
        </IconColumn>
      </GroupBody>
      <GroupLabel>イメージ</GroupLabel>
    </PaintGroup>
    <PaintGroup $w={77} $pad={2}>
      <GroupBody>
        <ToolGrid>
          <ToolCell aria-label="鉛筆"><PencilIcon /></ToolCell>
          <ToolCell aria-label="塗りつぶし"><BucketIcon /></ToolCell>
          <ToolCell aria-label="テキスト"><LetterIcon /></ToolCell>
          <ToolCell aria-label="消しゴム"><EraserIcon /></ToolCell>
          <ToolCell aria-label="色の選択"><DropperIcon /></ToolCell>
          <ToolCell aria-label="拡大鏡"><LensIcon /></ToolCell>
        </ToolGrid>
      </GroupBody>
      <GroupLabel>ツール</GroupLabel>
    </PaintGroup>
    <PaintGroup $w={50} $pad={3}>
      <GroupBody>
        <BigButton $w={41}>
          <BigIcon><BrushIcon /></BigIcon>ブラシ<ArrowLine><Down /></ArrowLine>
        </BigButton>
      </GroupBody>
    </PaintGroup>
    <PaintGroup $w={187} $pad={5}>
      <GroupBody>
        <ShapeBox>
          <ShapeGrid>
            {shapePaths.map((d, i) => <ToolCell key={d} aria-label={`図形 ${i + 1}`}><ShapeIcon d={d} open={i < 2} /></ToolCell>)}
          </ShapeGrid>
          <ShapeScroll>
            <ToolCell aria-label="上へ"><Ico w={5} h={3}><path d="M0 3h5L2.500 0z" fill="#b5b5b5" /></Ico></ToolCell>
            <ToolCell aria-label="下へ"><Down c="#3a4a63" /></ToolCell>
            <ToolCell aria-label="その他"><MoreIcon c="#3a4a63" /></ToolCell>
          </ShapeScroll>
        </ShapeBox>
        <ShapeOptions>
          <ShapeOption><OutlineIcon />輪郭<Down c="#aaa" /></ShapeOption>
          <ShapeOption><BucketIcon off />塗りつぶし<Down c="#aaa" /></ShapeOption>
        </ShapeOptions>
      </GroupBody>
      <GroupLabel>図形</GroupLabel>
    </PaintGroup>
    <PaintGroup $w={50} $pad={3}>
      <GroupBody>
        <BigButton $w={41} $off>
          <BigIcon><LinesIcon /></BigIcon>線の幅<ArrowLine><Down c="#aaa" /></ArrowLine>
        </BigButton>
      </GroupBody>
    </PaintGroup>
    <PaintGroup $w={343} $pad={4}>
      <GroupBody>
        <BigButton $w={41} $on><BigIcon><Swatch $c="#ed1c24" $s={31} /></BigIcon>色<span>1</span></BigButton>
        <BigButton $w={41}><BigIcon><Swatch $c="#fff" $s={24} /></BigIcon>色<span>2</span></BigButton>
        <Palette>
          {colors.map((c, i) => <PaletteCell key={i} $c={c} aria-label={`色 ${i + 1}`} />)}
        </Palette>
        <BigButton $w={37}><BigIcon><RainbowIcon /></BigIcon>色の<span>編集</span></BigButton>
      </GroupBody>
      <GroupLabel>色</GroupLabel>
    </PaintGroup>
    <PaintGroup $w={66}>
      <GroupBody><BigButton $w={65}><BigIcon><Paint3DIcon /></BigIcon>ペイント 3D<span>で編集する</span></BigButton></GroupBody>
    </PaintGroup>
    <PaintGroup $w={51}>
      <GroupBody><BigButton $w={50}><BigIcon><InfoIcon /></BigIcon>製品の<span>警告</span></BigButton></GroupBody>
    </PaintGroup>
  </PaintRibbon>
);

const ControlGallery = () => (
  <Gallery>
    <GalleryHead>フォーム コントロール</GalleryHead>
    <GalleryGrid>
      {formControls.map(([name, icon], i) => <GalleryCell key={i} aria-label={name}>{icon}</GalleryCell>)}
    </GalleryGrid>
    <GalleryHead>ActiveX コントロール</GalleryHead>
    <GalleryGrid>
      {activeX.map(([name, icon], i) => <GalleryCell key={i} aria-label={name} $hot={i === 0}>{icon}</GalleryCell>)}
    </GalleryGrid>
    <GalleryScroll>
      <GalleryArrow aria-label="左へ"><Ico w={5} h={7}><path d="M4.500 0v7L.500 3.500z" fill="#444" /></Ico></GalleryArrow>
      <GalleryThumb />
      <GalleryArrow aria-label="右へ"><Ico w={5} h={7}><path d="M.5 0v7l4-3.500z" fill="#444" /></Ico></GalleryArrow>
    </GalleryScroll>
    <RedMark />
  </Gallery>
);

const ExcelCommands = () => (
  <ExcelRibbon>
    <ExcelGroup $w={231}>
      <ExcelBody>
        <ExcelBig $w={76}><ExcelBigIcon><VBIcon /></ExcelBigIcon><Latin>Visual Basic</Latin></ExcelBig>
        <ExcelBig $w={36}><ExcelBigIcon><MacroIcon /></ExcelBigIcon>マクロ</ExcelBig>
        <SmallColumn>
          <SmallButton><RecordIcon />マクロの記録</SmallButton>
          <SmallButton><RelativeIcon />相対参照で記録</SmallButton>
          <SmallButton><WarnIcon />マクロのセキュリティ</SmallButton>
        </SmallColumn>
      </ExcelBody>
      <ExcelLabel>コード</ExcelLabel>
    </ExcelGroup>
    <ExcelGroup $w={130} $pad={3}>
      <ExcelBody>
        <ExcelBig $w={40}><ExcelBigIcon><HexIcon /></ExcelBigIcon>アド<span>イン</span></ExcelBig>
        <ExcelBig $w={40}><ExcelBigIcon><GearsIcon /></ExcelBigIcon><Latin>Excel</Latin>アドイン</ExcelBig>
        <ExcelBig $w={40}><ExcelBigIcon><ComIcon /></ExcelBigIcon><Latin>COM</Latin>アドイン</ExcelBig>
      </ExcelBody>
      <ExcelLabel>アドイン</ExcelLabel>
    </ExcelGroup>
    <ExcelGroup $w={193} $pad={3}>
      <ExcelBody>
        <ExcelBig $w={40}><ExcelBigIcon><ToolboxIcon /></ExcelBigIcon>挿入<ArrowLine><Down c="#555" /></ArrowLine></ExcelBig>
        <ExcelBig $w={40}><ExcelBigIcon><DesignIcon /></ExcelBigIcon>デザイン<span>モード</span></ExcelBig>
        <SmallColumn>
          <SmallButton><PropIcon />プロパティ</SmallButton>
          <SmallButton><CodeIcon />コードの表示</SmallButton>
          <SmallButton><DialogIcon />ダイアログの実行</SmallButton>
        </SmallColumn>
      </ExcelBody>
      <ControlGallery />
    </ExcelGroup>
    <ExcelGroup $w={253} $pad={4}>
      <ExcelBody>
        <ExcelBig $w={40}><ExcelBigIcon><SourceIcon /></ExcelBigIcon>ソース</ExcelBig>
        <SmallColumn $w={123}>
          <SmallButton $off><MapPropIcon />対応付けのプロパティ</SmallButton>
          <SmallButton><ExpandIcon />拡張パック</SmallButton>
          <SmallButton $off><RefreshIcon />データの更新</SmallButton>
        </SmallColumn>
        <SmallColumn>
          <SmallButton><ImportIcon />インポート</SmallButton>
          <SmallButton $off><ExportIcon />エクスポート</SmallButton>
        </SmallColumn>
      </ExcelBody>
      <ExcelLabel>XML</ExcelLabel>
    </ExcelGroup>
  </ExcelRibbon>
);

const ExcelWindow = () => (
  <Excel>
    <ExcelTitle>
      <ExcelQuick>
        <ToolButton aria-label="保存"><XSave /></ToolButton>
        <ToolButton aria-label="元に戻す"><XUndo /></ToolButton>
        <ToolButton aria-label="元に戻す履歴"><Down c="#fff" /></ToolButton>
        <ToolButton aria-label="やり直し"><XRedo /></ToolButton>
        <ToolButton aria-label="やり直し履歴"><Down c="#4f9470" /></ToolButton>
        <ToolButton aria-label="組織図"><XTree /></ToolButton>
        <ToolButton aria-label="カスタマイズ"><MoreIcon c="#fff" /></ToolButton>
      </ExcelQuick>
      <BookName>Book1  -  Excel</BookName>
      <BannerArt>
        <Ico w={58} h={33}>
          <path d="M1 0h4v16H1zM8 0h4v24H8zM15 0h4v16h-4zM22 0h4v31h-4zM29 0h4v21h-4zM46 0h8v14z" fill="#1c623b" />
        </Ico>
      </BannerArt>
    </ExcelTitle>
    <ExcelTabs>
      {excelTabs.map(([name, w]) => <ExcelTab key={name} $w={w} $on={name === "開発"}>{name}</ExcelTab>)}
      <TellMe>
        <Ico w={15} h={15}><circle cx="9" cy="5.500" r="4.500" stroke="#fff" strokeWidth="1.200" /><path d="M6 9l-5 5" stroke="#fff" strokeWidth="1.400" /></Ico>
        <input aria-label="操作アシスト" placeholder="実行したい作業を入力してください" />
      </TellMe>
    </ExcelTabs>
    <ExcelCommands />
    <FormulaBar>
      <NameBox>
        <input aria-label="名前ボックス" defaultValue="R12" />
        <Ico w={8} h={5}><path d="M0 0h8L4 4.500z" fill="#777" /></Ico>
      </NameBox>
      <Dots><Ico w={2} h={11}><path d="M0 0h2v2H0zM0 4h2v2H0zM0 8h2v2H0z" fill="#aaa" /></Ico></Dots>
      <FormulaButtons>
        <FormulaButton aria-label="キャンセル"><Ico w={11} h={11}><path d="M1 1l9 9M10 1l-9 9" stroke="#c0c0c0" strokeWidth="1.600" /></Ico></FormulaButton>
        <FormulaButton aria-label="入力"><Ico w={13} h={11}><path d="M1 5.500l3.500 4L12 1" stroke="#c0c0c0" strokeWidth="2.200" /></Ico></FormulaButton>
        <FormulaButton aria-label="関数の挿入">
          <Ico w={14} h={16}>
            <text x="1" y="12" fontFamily="Liberation Serif, serif" fontStyle="italic" fontWeight="700" fontSize="15" fill="#555">f<tspan fontSize="11">x</tspan></text>
          </Ico>
        </FormulaButton>
      </FormulaButtons>
      <FormulaInput aria-label="数式バー" />
    </FormulaBar>
    <SheetWrap>
      <Sheet>
        <thead>
          <tr>
            <Corner aria-label="すべて選択"><Ico w={17} h={17}><path d="M17 0v17H0z" fill="#b2b2b2" /></Ico></Corner>
            {columns.map((c) => <ColHead key={c} scope="col">{c}</ColHead>)}
          </tr>
        </thead>
        <tbody>
          {rows.map((r) => (
            <tr key={r}>
              <RowHead scope="row" $on={r === 12}><RowNumber>{r}</RowNumber></RowHead>
              {columns.map((c) => <td key={c} />)}
            </tr>
          ))}
        </tbody>
      </Sheet>
    </SheetWrap>
  </Excel>
);

const Status = () => (
  <StatusBar>
    <StatusCell $w={150}>
      <Ico w={10} h={10}><path d="M5 0v10M0 5h10" stroke="#33475f" strokeWidth="1.300" /><path d="M5 0l2 2.200H3zM5 10l2-2.200H3zM0 5l2.200-2v4zM10 5L7.800 3v4z" fill="#33475f" /></Ico>
    </StatusCell>
    <StatusCell $w={150}>
      <Ico w={13} h={12}><path d="M1.500 1v8M0 2.500L1.500.5 3 2.500M4 11h8M10.500 9.500l2 1.500-2 1" stroke="#33475f" /><path d="M4.500 1.500h7v7h-7z" stroke="#33475f" strokeDasharray="1.500 1" /></Ico>
      23 × 21px
    </StatusCell>
    <StatusCell $w={150}>
      <Ico w={13} h={12}><path d="M1.500 1v8M0 2.500L1.500.5 3 2.500M4 11h8M10.500 9.500l2 1.500-2 1" stroke="#33475f" /><path d="M4.500 1.500h8v6h-8z" stroke="#33475f" fill="#fff" /></Ico>
      1434 × 684px
    </StatusCell>
    <StatusCell $w={150} />
    <StatusCell />
    <ZoomArea>
      100%
      <ToolButton aria-label="縮小"><Ico w={16} h={16}><circle cx="8" cy="8" r="7" fill="#f7f7f7" stroke="#777" /><path d="M4.500 8h7" stroke="#444" strokeWidth="1.800" /></Ico></ToolButton>
      <Slider type="range" aria-label="ズーム" defaultValue={50} />
      <ToolButton aria-label="拡大"><Ico w={16} h={16}><circle cx="8" cy="8" r="7" fill="#f7f7f7" stroke="#777" /><path d="M4.500 8h7M8 4.500v7" stroke="#444" strokeWidth="1.800" /></Ico></ToolButton>
      <Grip><Ico w={9} h={9}><path d="M7 1h2v2H7zM4 4h2v2H4zM7 4h2v2H7zM1 7h2v2H1zM4 7h2v2H4zM7 7h2v2H7z" fill="#b5b5b5" /></Ico></Grip>
    </ZoomArea>
  </StatusBar>
);

export default function App() {
  return (
    <>
      <GlobalStyle />
      <Window>
        <PaintHeader />
        <PaintTools />
        <WorkArea>
          <Viewport>
            <ExcelWindow />
            <SelectionTop />
            <SelectionLeft />
            <Handle $x="3px" $y="2px" />
            <Handle $x="calc(69% - 2px)" $y="2px" />
            <Handle $x="3px" $y="55%" />
          </Viewport>
          <VScroll>
            <ScrollArrow aria-label="上へスクロール"><Chevron d="up" /></ScrollArrow>
            <Thumb $grow={517} />
            <Track $grow={55} />
            <ScrollArrow aria-label="下へスクロール"><Chevron d="down" /></ScrollArrow>
          </VScroll>
        </WorkArea>
        <HScroll>
          <ScrollArrow aria-label="左へスクロール"><Chevron d="left" /></ScrollArrow>
          <Thumb $grow={705} />
          <Track $grow={269} />
          <ScrollArrow aria-label="右へスクロール"><Chevron d="right" /></ScrollArrow>
        </HScroll>
        <Status />
      </Window>
    </>
  );
}
